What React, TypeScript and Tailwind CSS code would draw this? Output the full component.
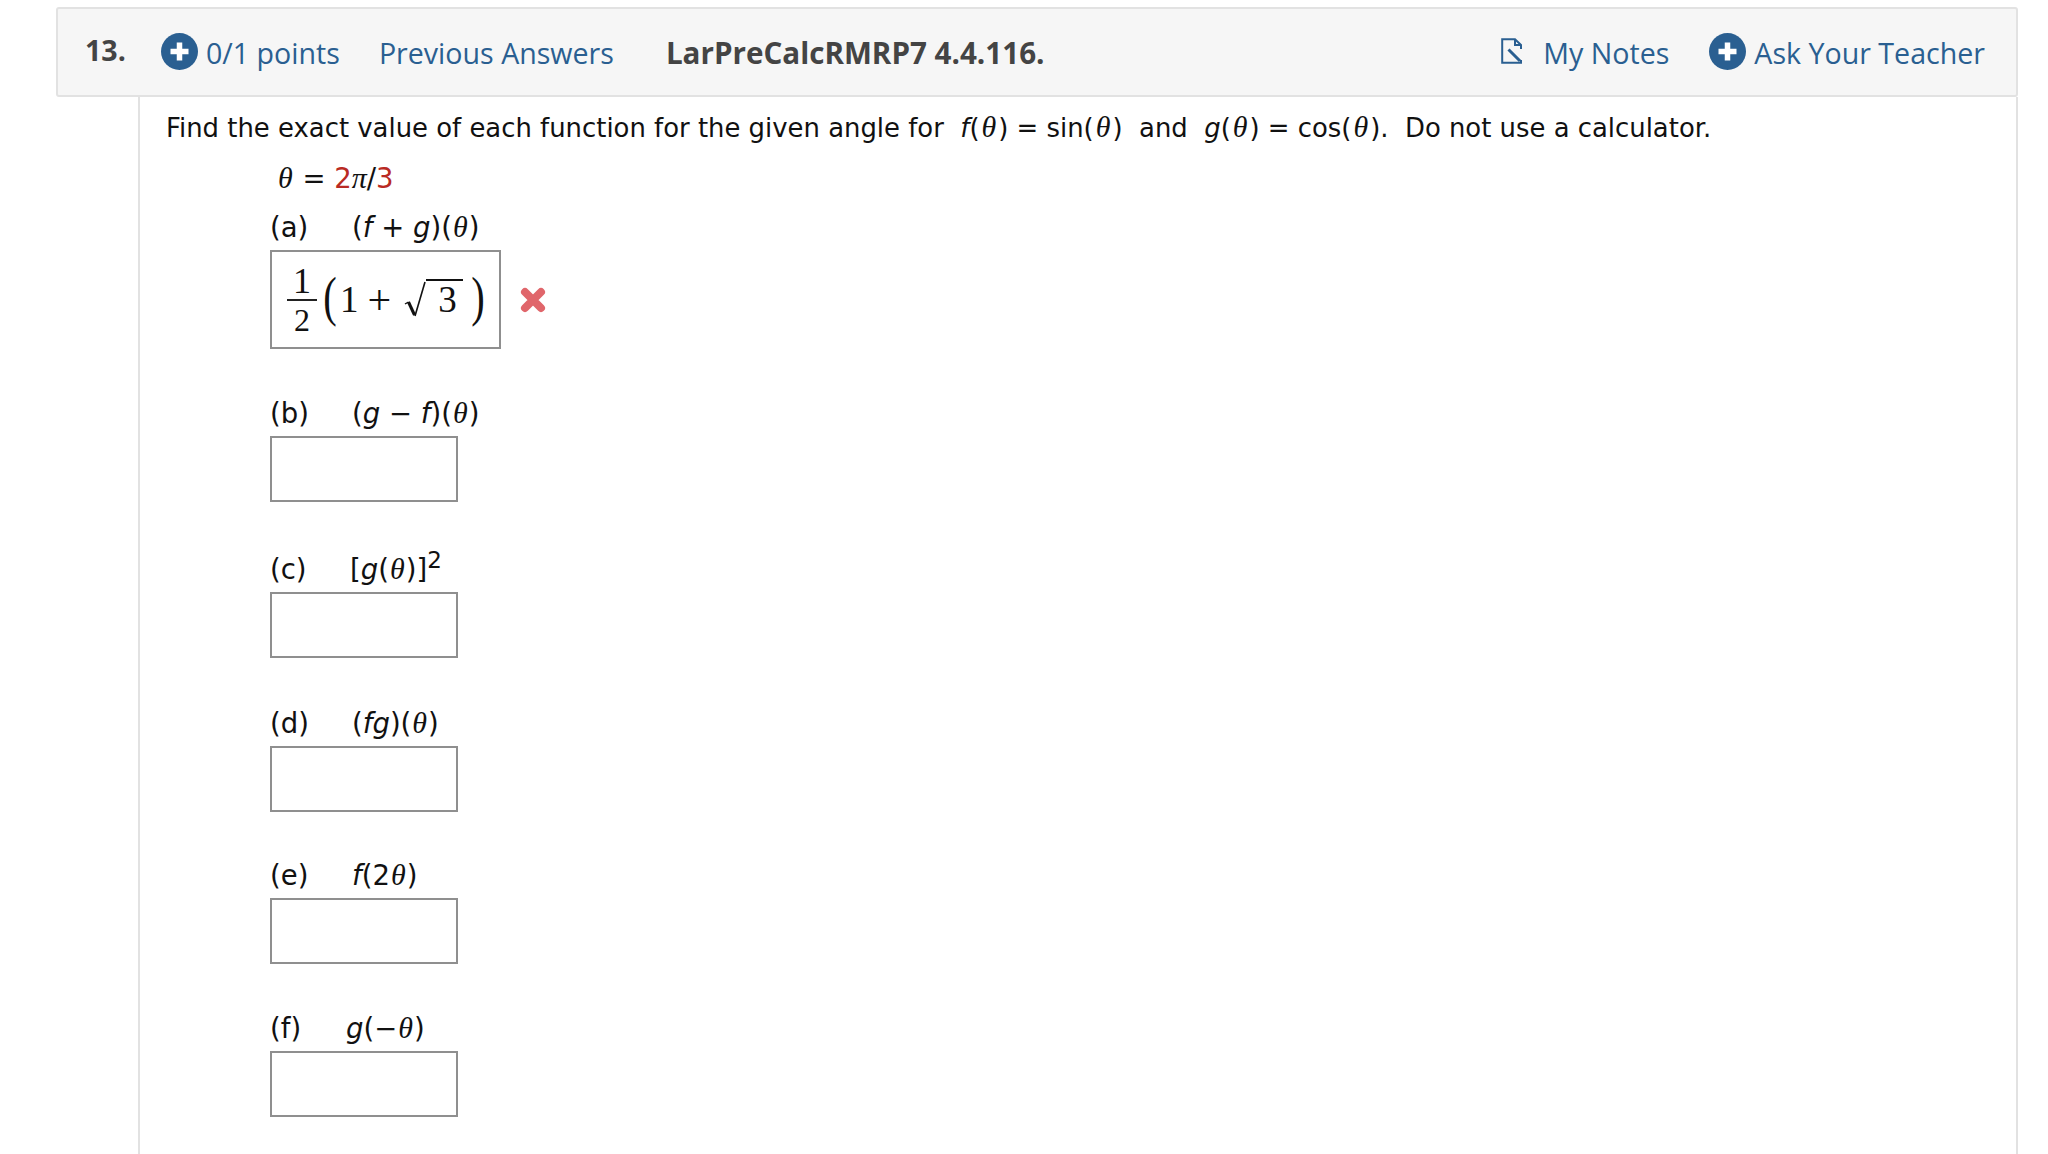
import React from "react";

const sans = "[font-family:'Open_Sans',sans-serif]";
const body = "[font-family:'DejaVu_Sans',sans-serif]";
const serif = "[font-family:'Liberation_Serif',serif]";

function PlusCircle() {
  return (
    <svg width="37" height="37" viewBox="0 0 37 37" className="shrink-0">
      <circle cx="18.5" cy="18.5" r="18.5" fill="#2a5f91" />
      <path d="M18.5 9.5v18M9.5 18.5h18" stroke="#fff" strokeWidth="5.5" strokeLinejoin="round" />
    </svg>
  );
}

function NotesIcon() {
  return (
    <svg width="22" height="26" viewBox="0 0 22 26" fill="none" stroke="#2a5f91" className="shrink-0">
      <path d="M20 11V7L14 1.2H1.2V24.8H20V22" strokeWidth="2" />
      <path d="M14 1.2V7H20" strokeWidth="2" />
      <path d="M7.5 11.5L19 23" strokeWidth="3" />
    </svg>
  );
}

// theta set in the serif italic, like the math font in the question text
function Th() {
  return <i className={`${serif} mx-[1px] text-[30px]`}>θ</i>;
}

// the question line spaces its thetas a bit wider
function WideTh() {
  return <i className={`${serif} mx-[2px] text-[30px]`}>θ</i>;
}

function Answer({ label, expr, top, children }: { label: string; expr: React.ReactNode; top: string; children?: React.ReactNode }) {
  return (
    <div className={top}>
      <div className="h-[36px] whitespace-nowrap text-[27.5px] leading-[36px]">
        <span className="inline-block w-[82px]">{label}</span>
        {expr}
      </div>
      {children ?? <div className="mt-[5px] h-[66px] w-[188px] border-2 border-[#8f8f8f]" />}
    </div>
  );
}

function FirstAnswer() {
  return (
    <div className="mt-[5px] flex items-center">
      <div className={`flex h-[99px] w-[231px] items-center border-2 border-[#8f8f8f] pl-[15px] ${serif} text-[37px] leading-none text-[#111]`}>
        <div className="flex w-[30px] flex-col items-center">
          <span className="pb-[1px] text-[36px] leading-[34px]">1</span>
          <span className="h-[2px] w-full bg-[#222]" />
          <span className="pt-[3px] text-[32px] leading-[32px]">2</span>
        </div>
        <span className="ml-[4px] mt-[-6px] scale-x-75 text-[54px]">(</span>
        <span className="ml-[1px]">1</span>
        <span className="ml-[9px] text-[42px]">+</span>
        <svg width="22" height="37" viewBox="0 0 22 37" fill="none" stroke="#111" className="ml-[13px] mt-[-1px] shrink-0">
          <path d="M1 23L4.5 21" strokeWidth="1.4" />
          <path d="M4.5 21L10.5 34" strokeWidth="3" />
          <path d="M11 35L21 1" strokeWidth="1.6" />
        </svg>
        <span className="mt-[-1px] border-t-2 border-[#111] pl-[12px] pr-[6px] leading-[38px]">3</span>
        <span className="ml-[6px] mt-[-6px] scale-x-75 text-[54px]">)</span>
      </div>
      <svg width="26" height="26" viewBox="0 0 26 26" className="ml-[19px] mt-[1px]">
        <path d="M5 5L21 21M21 5L5 21" stroke="#e0666b" strokeWidth="8" strokeLinecap="round" />
      </svg>
    </div>
  );
}

export default function App() {
  return (
    <div className="h-[1154px] overflow-hidden bg-white pt-[7px]">
      <header className={`ml-[56px] flex h-[90px] w-[1962px] items-center rounded-[3px] border-2 border-[#e2e2e2] bg-[#f6f6f6] pb-[1px] text-[28.6px] ${sans}`}>
        <span className="mb-[2px] ml-[27px] w-[76px] font-bold text-[#444]">13.</span>
        <PlusCircle />
        <span className="ml-[8px] mt-[3px] font-medium text-[#2a5f91]">0/1 points</span>
        <span className="ml-[39px] mt-[3px] font-medium text-[#2a5f91]">Previous Answers</span>
        <span className="ml-[52px] mt-[3px] text-[29.6px] font-bold text-[#444]">LarPreCalcRMRP7 4.4.116.</span>
        <div className="ml-auto mr-[31px] flex items-center">
          <NotesIcon />
          <span className="ml-[20px] mt-[3px] font-medium text-[#2a5f91]">My Notes</span>
          <span className="ml-[40px]"><PlusCircle /></span>
          <span className="ml-[8px] mt-[3px] font-medium text-[#2a5f91]">Ask Your Teacher</span>
        </div>
      </header>

      <main className={`ml-[138px] h-[1057px] w-[1880px] border-x-2 border-[#e2e2e2] pl-[26px] pt-[12px] text-[25.9px] text-[#111] ${body}`}>
        <p className="h-[36px] whitespace-pre leading-[36px]">
          Find the exact value of each function for the given angle for  <i>f</i>(<WideTh />) = sin(<WideTh />)  and  <i>g</i>(<WideTh />) = cos(<WideTh />).  Do not use a calculator.
        </p>
        <div className="ml-[104px]">
          <p className="ml-[7px] mt-[15px] h-[36px] text-[27.5px] leading-[36px]">
            <Th /> = <span className="text-[#b92a23]">2<i className={`${serif} text-[30px] text-[#111]`}>π</i><span className="text-[#111]">/</span>3</span>
          </p>
          <Answer label="(a)" top="mt-[13px]" expr={<>(<i>f</i> + <i>g</i>)(<Th />)</>}>
            <FirstAnswer />
          </Answer>
          <Answer label="(b)" top="mt-[46px]" expr={<>(<i>g</i> − <i>f</i>)(<Th />)</>} />
          <Answer label="(c)" top="mt-[49px]" expr={<span className="ml-[-2px]">[<i>g</i>(<Th />)]<sup className="text-[23px]">2</sup></span>} />
          <Answer label="(d)" top="mt-[47px]" expr={<>(<i>fg</i>)(<Th />)</>} />
          <Answer label="(e)" top="mt-[45px]" expr={<><i>f</i>(2<Th />)</>} />
          <Answer label="(f)" top="mt-[46px]" expr={<span className="ml-[-6px]"><i>g</i>(−<Th />)</span>} />
        </div>
      </main>
    </div>
  );
}
